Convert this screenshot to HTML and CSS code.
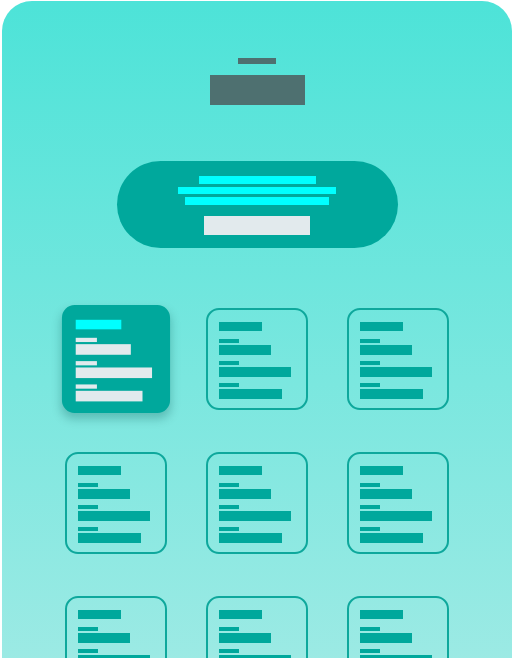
FILE: index.html
```html
<!DOCTYPE html>
<html lang="en">
<head>
<meta charset="utf-8">
<title>Layout</title>
<link rel="stylesheet" href="styles.css">
</head>
<body>
<div class="screen">
  <div class="header">
    <div class="header-tick"></div>
    <div class="header-block"></div>
  </div>
  <div class="hero">
    <div class="hero-line l1"></div>
    <div class="hero-line l2"></div>
    <div class="hero-line l3"></div>
    <div class="hero-button"></div>
  </div>
  <div class="grid">
    <div class="card selected">
      <div class="title"></div>
      <div class="field"><div class="label"></div><div class="value v1"></div></div>
      <div class="field"><div class="label"></div><div class="value v2"></div></div>
      <div class="field"><div class="label"></div><div class="value v3"></div></div>
    </div>
    <div class="card">
      <div class="title"></div>
      <div class="field"><div class="label"></div><div class="value v1"></div></div>
      <div class="field"><div class="label"></div><div class="value v2"></div></div>
      <div class="field"><div class="label"></div><div class="value v3"></div></div>
    </div>
    <div class="card">
      <div class="title"></div>
      <div class="field"><div class="label"></div><div class="value v1"></div></div>
      <div class="field"><div class="label"></div><div class="value v2"></div></div>
      <div class="field"><div class="label"></div><div class="value v3"></div></div>
    </div>
    <div class="card">
      <div class="title"></div>
      <div class="field"><div class="label"></div><div class="value v1"></div></div>
      <div class="field"><div class="label"></div><div class="value v2"></div></div>
      <div class="field"><div class="label"></div><div class="value v3"></div></div>
    </div>
    <div class="card">
      <div class="title"></div>
      <div class="field"><div class="label"></div><div class="value v1"></div></div>
      <div class="field"><div class="label"></div><div class="value v2"></div></div>
      <div class="field"><div class="label"></div><div class="value v3"></div></div>
    </div>
    <div class="card">
      <div class="title"></div>
      <div class="field"><div class="label"></div><div class="value v1"></div></div>
      <div class="field"><div class="label"></div><div class="value v2"></div></div>
      <div class="field"><div class="label"></div><div class="value v3"></div></div>
    </div>
    <div class="card">
      <div class="title"></div>
      <div class="field"><div class="label"></div><div class="value v1"></div></div>
      <div class="field"><div class="label"></div><div class="value v2"></div></div>
      <div class="field"><div class="label"></div><div class="value v3"></div></div>
    </div>
    <div class="card">
      <div class="title"></div>
      <div class="field"><div class="label"></div><div class="value v1"></div></div>
      <div class="field"><div class="label"></div><div class="value v2"></div></div>
      <div class="field"><div class="label"></div><div class="value v3"></div></div>
    </div>
    <div class="card">
      <div class="title"></div>
      <div class="field"><div class="label"></div><div class="value v1"></div></div>
      <div class="field"><div class="label"></div><div class="value v2"></div></div>
      <div class="field"><div class="label"></div><div class="value v3"></div></div>
    </div>
  </div>
</div>
</body>
</html>
```

FILE: styles.css
```css
html, body {
  margin: 0;
  padding: 0;
  background: #ffffff;
  font-family: "Liberation Sans", Arial, sans-serif;
  overflow: hidden;
}

.screen {
  margin: 1px 0 0 2px;
  width: 510px;
  height: 760px;
  box-sizing: border-box;
  border-radius: 30px 30px 0 0;
  background: linear-gradient(180deg, #4de3d8 0%, #a8ebe6 100%);
  padding-top: 57px;
  display: flex;
  flex-direction: column;
  align-items: center;
}

.header {
  display: flex;
  flex-direction: column;
  align-items: center;
  gap: 11px;
}

.header-tick {
  width: 38px;
  height: 6px;
  background: #4e7070;
}

.header-block {
  width: 95px;
  height: 30px;
  background: #4e7070;
}

.hero {
  margin-top: 56px;
  width: 281px;
  height: 87px;
  box-sizing: border-box;
  border-radius: 44px;
  background: #00a89c;
  padding-top: 15px;
  display: flex;
  flex-direction: column;
  align-items: center;
  gap: 3px;
}

.hero-line {
  background: #00ffff;
}

.hero-line.l1 { width: 117px; height: 8px; }
.hero-line.l2 { width: 158px; height: 7px; }
.hero-line.l3 { width: 144px; height: 8px; }

.hero-button {
  margin-top: 8px;
  width: 106px;
  height: 19px;
  background: #e2eaed;
}

.grid {
  margin-top: 60px;
  display: grid;
  grid-template-columns: repeat(3, 102px);
  column-gap: 39px;
  row-gap: 42px;
}

.card {
  width: 102px;
  height: 102px;
  box-sizing: border-box;
  border: 2px solid #0ea89c;
  border-radius: 13px;
  padding: 12px 0 0 11px;
  display: flex;
  flex-direction: column;
  gap: 6px;
}

.card .title {
  width: 43px;
  height: 9px;
  background: #00a89c;
  margin-bottom: 2px;
}

.field {
  display: flex;
  flex-direction: column;
  gap: 2px;
}

.label {
  width: 20px;
  height: 4px;
  background: #00a89c;
}

.value {
  height: 10px;
  background: #00a89c;
}

.value.v1 { width: 52px; }
.value.v2 { width: 72px; }
.value.v3 { width: 63px; }

.card.selected {
  background: #00a89c;
  border-color: #00a89c;
  border-radius: 12px;
  transform: scale(1.06);
  box-shadow: 0 5px 9px rgba(0, 80, 75, 0.28);
}

.card.selected .title {
  background: #00ffff;
}

.card.selected .label,
.card.selected .value {
  background: #e2eaed;
}
```
